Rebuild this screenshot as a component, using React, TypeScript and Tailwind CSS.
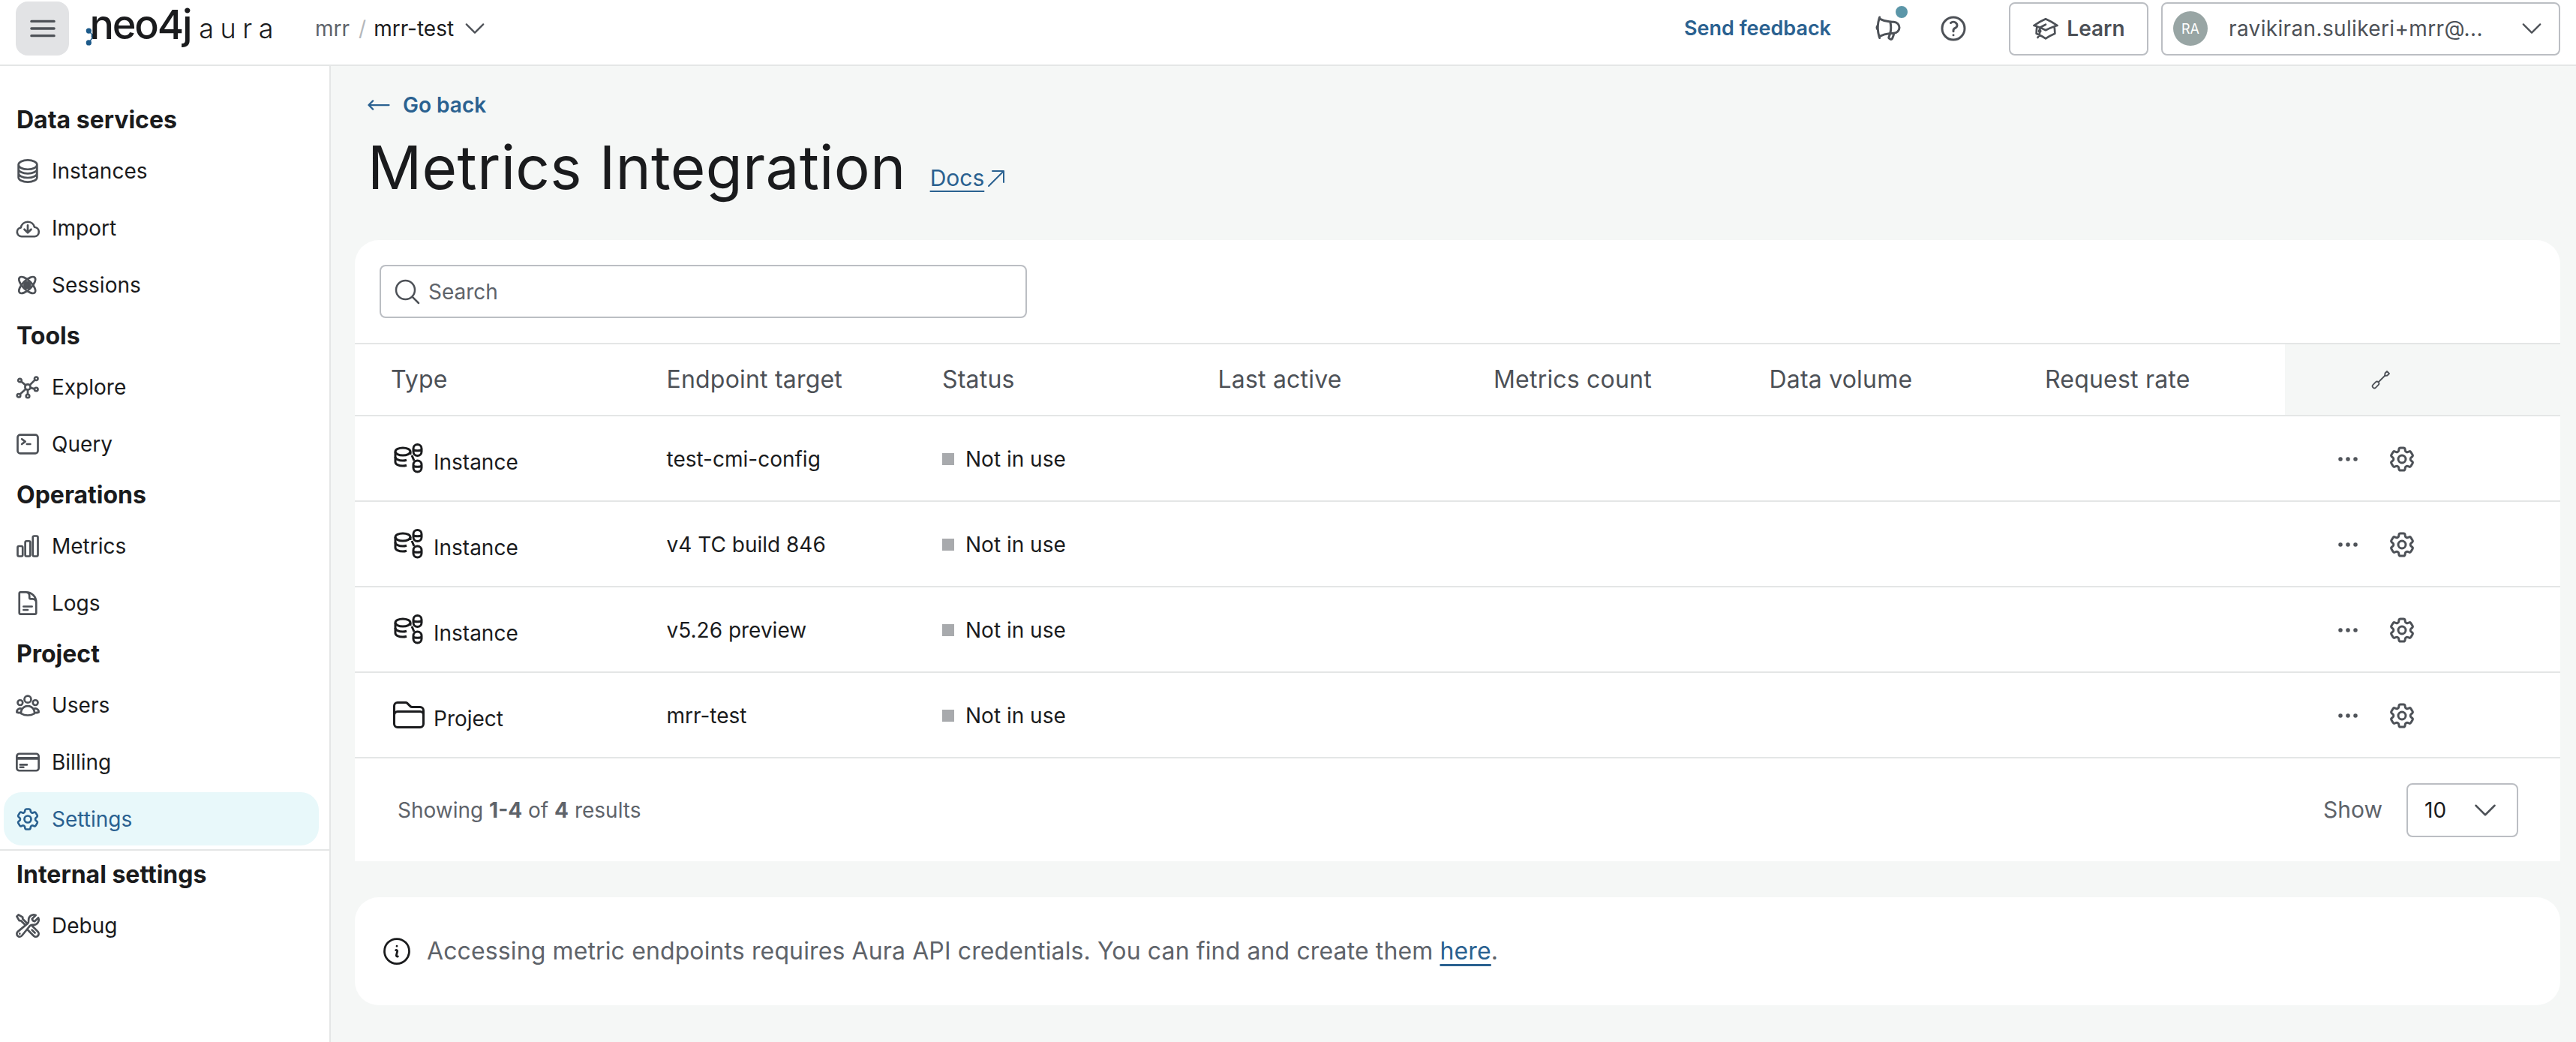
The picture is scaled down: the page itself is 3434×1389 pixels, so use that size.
import {
  HiOutlineAcademicCap,
  HiOutlineArrowLongLeft,
  HiOutlineArrowUpRight,
  HiOutlineBars3,
  HiOutlineChartBar,
  HiOutlineChevronDown,
  HiOutlineCircleStack,
  HiOutlineCog6Tooth,
  HiOutlineCommandLine,
  HiOutlineCreditCard,
  HiOutlineDocumentText,
  HiOutlineEllipsisHorizontal,
  HiOutlineFolder,
  HiOutlineInformationCircle,
  HiOutlineMagnifyingGlass,
  HiOutlineMegaphone,
  HiOutlineQuestionMarkCircle,
  HiOutlineUserGroup,
  HiOutlineWrenchScrewdriver,
} from "react-icons/hi2"

function ImportIcon({ className }: { className?: string }) {
  return (
    <svg viewBox="0 0 24 24" fill="none" stroke="currentColor" strokeLinecap="round" strokeLinejoin="round" className={className}>
      <path d="M6.5 19.5a4 4 0 0 1-.6-7.95 6.2 6.2 0 0 1 12.1-.4 4.2 4.2 0 0 1 .2 8.35z" />
      <path d="M12 9.5v6.5M9 13.2l3 3 3-3" />
    </svg>
  )
}

function SessionsIcon({ className }: { className?: string }) {
  return (
    <svg viewBox="0 0 24 24" fill="none" stroke="currentColor" className={className}>
      <ellipse cx="11.5" cy="12" rx="9.5" ry="4" transform="rotate(45 11.5 12)" />
      <ellipse cx="11.5" cy="12" rx="9.5" ry="4" transform="rotate(-45 11.5 12)" />
      <circle cx="11.5" cy="12" r="2.6" fill="currentColor" />
    </svg>
  )
}

function ExploreIcon({ className }: { className?: string }) {
  return (
    <svg viewBox="0 0 24 24" fill="none" stroke="currentColor" className={className}>
      <circle cx="12" cy="12" r="2.4" />
      <circle cx="5" cy="6" r="1.5" />
      <circle cx="19.5" cy="4.5" r="1.5" />
      <circle cx="19.5" cy="14" r="1.5" />
      <circle cx="4" cy="19.5" r="1.5" />
      <circle cx="12" cy="20" r="1.5" />
      <path d="M6.2 7l4 3.4M18.4 5.6l-4.8 4.8M18 13.6l-3.7-1M10.3 13.7l-5.2 4.7M12 14.4v4" />
    </svg>
  )
}

function InstanceIcon({ className }: { className?: string }) {
  return (
    <svg viewBox="0 0 40 40" fill="none" stroke="currentColor" strokeWidth={3} strokeLinejoin="round" className={className}>
      <ellipse cx="12" cy="11" rx="10" ry="5" />
      <path d="M2 11v14c0 3 4.5 5 10 5 2 0 3-.2 5-.8" />
      <path d="M2 18c0 3 4.500 5 10 5 2 0 3-.2 5-.8M22 11v4" />
      <rect x="26" y="1.500" width="11" height="15" rx="5.500" />
      <path d="M26 8.500c1.500 1.800 9.500 1.800 11 0" />
      <rect x="26" y="23" width="11" height="15" rx="5.500" />
      <path d="M26 30c1.500 1.800 9.500 1.800 11 0M24 16l3 7" />
    </svg>
  )
}

function ColumnsToolIcon({ className }: { className?: string }) {
  return (
    <svg viewBox="0 0 26 26" fill="none" stroke="currentColor" strokeWidth={1.8} strokeLinejoin="round" strokeLinecap="round" className={className}>
      <rect x="-5" y="-2.600" width="10" height="5.200" rx="2.600" transform="translate(6 20) rotate(-45)" />
      <path d="M10 16l8-8" />
      <path d="M18 8l.5-3.500 2.500-2.500 3 3-2.500 2.500z" />
    </svg>
  )
}

const sidebarSections = [
  {
    title: "Data services",
    items: [
      { label: "Instances", icon: HiOutlineCircleStack },
      { label: "Import", icon: ImportIcon },
      { label: "Sessions", icon: SessionsIcon },
    ],
  },
  {
    title: "Tools",
    items: [
      { label: "Explore", icon: ExploreIcon },
      { label: "Query", icon: HiOutlineCommandLine },
    ],
  },
  {
    title: "Operations",
    items: [
      { label: "Metrics", icon: HiOutlineChartBar },
      { label: "Logs", icon: HiOutlineDocumentText },
    ],
  },
  {
    title: "Project",
    items: [
      { label: "Users", icon: HiOutlineUserGroup },
      { label: "Billing", icon: HiOutlineCreditCard },
      { label: "Settings", icon: HiOutlineCog6Tooth, active: true },
    ],
  },
]

const columns = ["Type", "Endpoint target", "Status", "Last active", "Metrics count", "Data volume", "Request rate"]

const rows = [
  { type: "Instance", target: "test-cmi-config" },
  { type: "Instance", target: "v4 TC build 846" },
  { type: "Instance", target: "v5.26 preview" },
  { type: "Project", target: "mrr-test" },
]

function SidebarHeading({ children }: { children: string }) {
  return <div className="h-[55px] mb-[5px] pl-[22px] flex items-center text-[32px] font-bold text-[#1a1b1d]">{children}</div>
}

function SidebarItem({ label, icon: Icon, active }: { label: string; icon: React.ComponentType<{ className?: string }>; active?: boolean }) {
  return (
    <div className={`h-[71px] mb-[5px] ml-[5px] mr-[14px] pl-[14px] rounded-[24px] flex items-center gap-[14px] text-[28px] ${active ? "bg-[#e8f8fa] text-[#2a6190]" : "text-[#1a1b1d]"}`}>
      <Icon className={`w-9 h-9 shrink-0 [stroke-width:1.8] ${active ? "text-[#2a6190]" : "text-[#4d5157]"}`} />
      <span>{label}</span>
    </div>
  )
}

function Header() {
  return (
    <header className="h-[88px] shrink-0 bg-white border-b-2 border-[#e4e6e6] flex items-center pl-[21px] pr-[21px] pb-[10px]">
      <button className="w-[71px] h-[72px] rounded-[16px] bg-[#e2e3e5] flex items-center justify-center text-[#4d5157]">
        <HiOutlineBars3 className="w-11 h-11 [stroke-width:1.8]" />
      </button>
      <div className="ml-[22px] w-[259px] flex items-center relative">
        <svg viewBox="0 0 20 34" className="w-[20px] h-[34px] mt-[22px] text-[#1c5a8a]" fill="currentColor" stroke="currentColor" strokeWidth={2}>
          <circle cx="6" cy="6" r="4" />
          <circle cx="15" cy="16" r="3.500" />
          <circle cx="6" cy="28" r="4" />
          <path d="M6 6l9 10-9 12" fill="none" />
        </svg>
        <span className="text-[54px] leading-none font-medium tracking-[-2.2px] text-[#1a1b1d] -ml-[9px] -mt-[10px]">neo4j</span>
        <span className="text-[36px] leading-none font-light tracking-[8.500px] text-[#1a1b1d] ml-[11px]">aura</span>
      </div>
      <span className="ml-[47px] text-[28px] text-[#5e636a]">mrr</span>
      <span className="ml-[12px] text-[28px] text-[#b4b7bb]">/</span>
      <span className="ml-[10px] text-[28px] text-[#1a1b1d]">mrr-test</span>
      <HiOutlineChevronDown className="ml-[10px] w-9 h-9 text-[#4d5157]" />
      <div className="ml-auto flex items-center">
        <span className="text-[27px] font-semibold text-[#2a6190]">Send feedback</span>
        <div className="relative ml-[56px] text-[#4d5157]">
          <HiOutlineMegaphone className="w-10 h-10 -scale-x-100 [stroke-width:1.8]" />
          <span className="absolute right-[-6px] top-[-10px] w-[16px] h-[16px] rounded-full bg-[#5b96a8]" />
        </div>
        <HiOutlineQuestionMarkCircle className="ml-[47px] w-10 h-10 text-[#4d5157] [stroke-width:1.8]" />
        <button className="ml-[54px] w-[186px] h-[71px] rounded-[8px] border-2 border-[#bbbec3] flex items-center justify-center gap-[10px] text-[28px] font-semibold text-[#4d5157]">
          <HiOutlineAcademicCap className="w-9 h-9 [stroke-width:1.8]" />
          Learn
        </button>
        <button className="ml-[17px] w-[532px] h-[71px] rounded-[8px] border-2 border-[#bbbec3] flex items-center pl-[14px] pr-[18px] text-[#4d5157]">
          <span className="w-[46px] h-[46px] rounded-full bg-[#98a5a4] text-white text-[18px] flex items-center justify-center shrink-0">RA</span>
          <span className="ml-[28px] text-[28px] tracking-[0.35px] whitespace-nowrap">ravikiran.sulikeri+mrr@...</span>
          <HiOutlineChevronDown className="ml-auto w-9 h-9" />
        </button>
      </div>
    </header>
  )
}

function Sidebar() {
  return (
    <aside className="w-[441px] shrink-0 bg-white border-r-2 border-[#e4e6e6] pt-[44px]">
      {sidebarSections.map((section) => (
        <div key={section.title}>
          <SidebarHeading>{section.title}</SidebarHeading>
          {section.items.map((item) => (
            <SidebarItem key={item.label} label={item.label} icon={item.icon} active={"active" in item && item.active} />
          ))}
        </div>
      ))}
      <div className="border-t-2 border-[#e4e6e6] pt-[4px]">
        <SidebarHeading>Internal settings</SidebarHeading>
        <SidebarItem label="Debug" icon={HiOutlineWrenchScrewdriver} />
      </div>
    </aside>
  )
}

function MetricsTable() {
  return (
    <div className="bg-white rounded-t-[32px]">
      <div className="h-[137px] pl-[33px] pt-[33px]">
        <div className="w-[863px] h-[71px] rounded-[8px] border-2 border-[#bbbec3] flex items-center pl-[15px] gap-[8px] text-[#4d5157]">
          <HiOutlineMagnifyingGlass className="w-10 h-10" />
          <span className="text-[28px] text-[#5e636a]">Search</span>
        </div>
      </div>
      <div className="grid grid-cols-8 h-[98px] border-y-2 border-[#e4e6e6] text-[32px] tracking-[0.2px] text-[#4d5157]">
        {columns.map((column) => (
          <div key={column} className="pl-[48px] flex items-center">{column}</div>
        ))}
        <div className="bg-[#f5f7f6] pl-[115px] flex items-center text-[#4d5157]">
          <ColumnsToolIcon className="w-[26px] h-[26px]" />
        </div>
      </div>
      {rows.map((row) => (
        <div key={row.target} className="grid grid-cols-8 h-[114px] border-b-2 border-[#e4e6e6] text-[28px] text-[#1a1b1d]">
          <div className="pl-[52px] flex items-center gap-[13px]">
            {row.type === "Instance" ? (
              <InstanceIcon className="w-10 h-10 shrink-0" />
            ) : (
              <HiOutlineFolder className="w-[48px] h-[48px] -ml-[4px] -mr-[4px] shrink-0" />
            )}
            <span className="mt-[10px]">{row.type}</span>
          </div>
          <div className="pl-[48px] pt-[2px] flex items-center">{row.target}</div>
          <div className="pl-[48px] pt-[2px] flex items-center gap-[15px]">
            <span className="w-[16px] h-[16px] bg-[#a8aaad]" />
            Not in use
          </div>
          <div />
          <div />
          <div />
          <div />
          <div className="pl-[64px] pt-[2px] flex items-center gap-[32px] text-[#4d5157]">
            <HiOutlineEllipsisHorizontal className="w-10 h-10 [stroke-width:1.8]" />
            <HiOutlineCog6Tooth className="w-10 h-10 [stroke-width:1.8]" />
          </div>
        </div>
      ))}
      <div className="h-[137px] pl-[57px] pr-[56px] flex items-center justify-between text-[28px] text-[#5e636a]">
        <span>
          Showing <b className="font-bold">1-4</b> of <b className="font-bold">4</b> results
        </span>
        <div className="flex items-center gap-[32px]">
          <span className="text-[30px]">Show</span>
          <div className="w-[149px] h-[72px] rounded-[8px] border-2 border-[#bbbec3] flex items-center justify-between pl-[22px] pr-[22px] text-[#1a1b1d]">
            10
            <HiOutlineChevronDown className="w-10 h-10 text-[#4d5157]" />
          </div>
        </div>
      </div>
    </div>
  )
}

export default function App() {
  return (
    <div className="h-[1389px] flex flex-col overflow-hidden bg-[#f5f7f6] font-['Inter',sans-serif]">
      <Header />
      <div className="flex flex-1 min-h-0">
        <Sidebar />
        <main className="flex-1 pl-[32px] pr-[21px]">
          <div className="h-[76px] mt-[14px] pl-[14px] flex items-center gap-[14px] text-[#2a6190]">
            <HiOutlineArrowLongLeft className="w-9 h-9" />
            <span className="text-[28px] font-semibold">Go back</span>
          </div>
          <div className="h-[89px] pl-[17px] flex items-center">
            <h1 className="text-[80px] leading-none font-normal tracking-[0.3px] text-[#1a1b1d]">Metrics Integration</h1>
            <span className="ml-[32px] mt-[30px] flex items-center text-[30px] text-[#2a6190]">
              <span className="underline decoration-2 underline-offset-[6px]">Docs</span>
              <HiOutlineArrowUpRight className="w-8 h-8" />
            </span>
          </div>
          <div className="mt-[53px]">
            <MetricsTable />
          </div>
          <div className="mt-[48px] h-[144px] bg-white rounded-[32px] flex items-center pl-[34px] gap-[18px] text-[32px] tracking-[0.12px] text-[#5e636a]">
            <HiOutlineInformationCircle className="w-[44px] h-[44px] text-[#1a1b1d] shrink-0" />
            <span>
              Accessing metric endpoints requires Aura API credentials. You can find and create them{" "}
              <span className="text-[#2a6190] underline decoration-[3px] underline-offset-[6px]">here</span>.
            </span>
          </div>
        </main>
      </div>
    </div>
  )
}
